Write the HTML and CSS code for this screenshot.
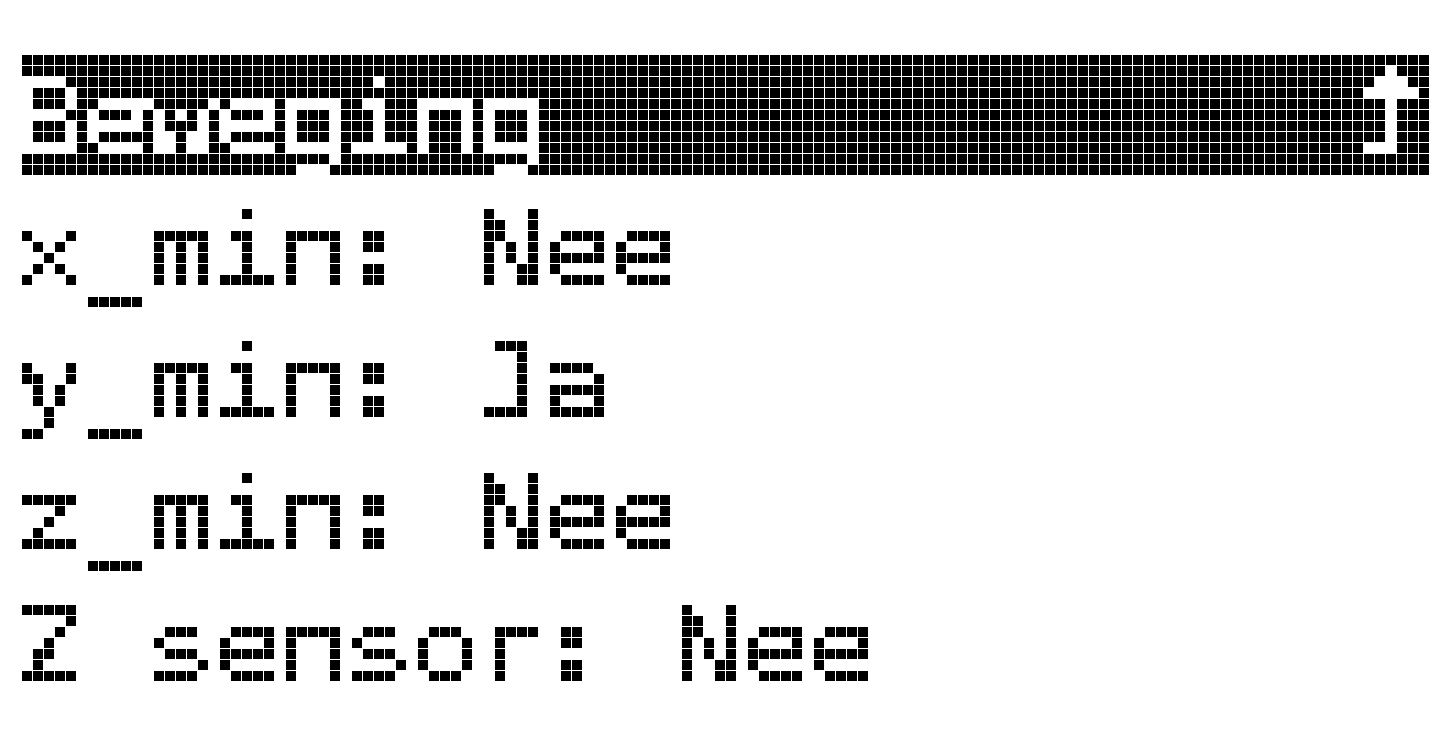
FILE: index.html
```html
<!DOCTYPE html>
<html lang="nl">
<head>
<meta charset="utf-8">
<title>Beweging</title>
<link rel="stylesheet" href="styles.css">
</head>
<body>
<svg class="defs" width="0" height="0" aria-hidden="true">
  <filter id="pix" x="0" y="0" width="1" height="1" filterUnits="objectBoundingBox" primitiveUnits="userSpaceOnUse" color-interpolation-filters="sRGB">
    <feMorphology in="SourceGraphic" operator="dilate" radius="0 1" result="thick"/>
    <feFlood x="5" y="5" width="1" height="1" flood-color="#000" flood-opacity="1" result="dot"/>
    <feComposite in="dot" in2="dot" operator="over" x="0" y="0" width="11" height="11" result="cell"/>
    <feTile in="cell" result="dots"/>
    <feComposite in="thick" in2="dots" operator="in" result="sampled"/>
    <feComponentTransfer in="sampled" result="bin">
      <feFuncR type="discrete" tableValues="0 1"/>
      <feFuncG type="discrete" tableValues="0 1"/>
      <feFuncB type="discrete" tableValues="0 1"/>
      <feFuncA type="discrete" tableValues="0 1"/>
    </feComponentTransfer>
    <feMorphology in="bin" operator="dilate" radius="5"/>
  </filter>
</svg>
<main class="screen">
  <div class="lcd">
    <header class="bar">
      <span class="txt">Beweging</span>
      <svg class="arrow" viewBox="0 0 55 88" aria-hidden="true">
        <rect x="22" y="0" width="11" height="11"/>
        <rect x="11" y="11" width="33" height="11"/>
        <rect x="0" y="22" width="55" height="11"/>
        <rect x="22" y="33" width="11" height="55"/>
        <rect x="0" y="77" width="33" height="11"/>
      </svg>
    </header>
    <p class="line"><span class="txt">x<span class="us">_</span>min<span class="colon">:</span> Nee</span></p>
    <p class="line"><span class="txt">y<span class="us">_</span>min<span class="colon">:</span> Ja</span></p>
    <p class="line"><span class="txt">z<span class="us">_</span>min<span class="colon">:</span> Nee</span></p>
    <p class="line"><span class="txt">Z sensor<span class="colon">:</span> Nee</span></p>
  </div>
  <div class="grid"></div>
</main>
</body>
</html>
```
FILE: styles.css
```css
html, body {
  margin: 0;
  padding: 0;
  background: #fff;
  overflow: hidden;
}
body {
  padding: 55px 0 0 22px;
}
.defs {
  position: absolute;
  width: 0;
  height: 0;
  overflow: hidden;
}
.screen {
  position: relative;
  width: 1408px;
  height: 704px;
}
.lcd {
  width: 1408px;
  height: 704px;
  display: flex;
  flex-direction: column;
  filter: url(#pix);
}
.bar {
  display: flex;
  justify-content: space-between;
  align-items: flex-start;
  height: 121px;
  margin-bottom: 11px;
  padding-right: 11px;
  background: #000;
  color: #fff;
  line-height: 121px;
  flex: none;
}
.arrow {
  width: 55px;
  height: 88px;
  margin-top: 11px;
  fill: #fff;
  flex: none;
}
.line {
  height: 132px;
  margin: 0;
  color: #000;
  line-height: 121px;
  flex: none;
}
.txt {
  display: inline-block;
  font-family: "DejaVu Sans Mono", monospace;
  font-size: 101px;
  letter-spacing: -5.8px;
  white-space: pre;
  transform: translate(-9px, 5px) scaleX(1.2);
  transform-origin: 0 0;
}
.us {
  display: inline-block;
  transform: translateY(-7px) scaleX(0.75);
  transform-origin: 50% 50%;
}
.colon {
  display: inline-block;
  font-weight: bold;
  transform: translateX(-5px) scaleX(0.74);
  transform-origin: 50% 50%;
}
.grid {
  position: absolute;
  inset: 0;
  pointer-events: none;
  background-image:
    linear-gradient(90deg, transparent 10px, #fff 10px),
    linear-gradient(180deg, transparent 10px, #fff 10px);
  background-size: 11px 11px;
}
```
